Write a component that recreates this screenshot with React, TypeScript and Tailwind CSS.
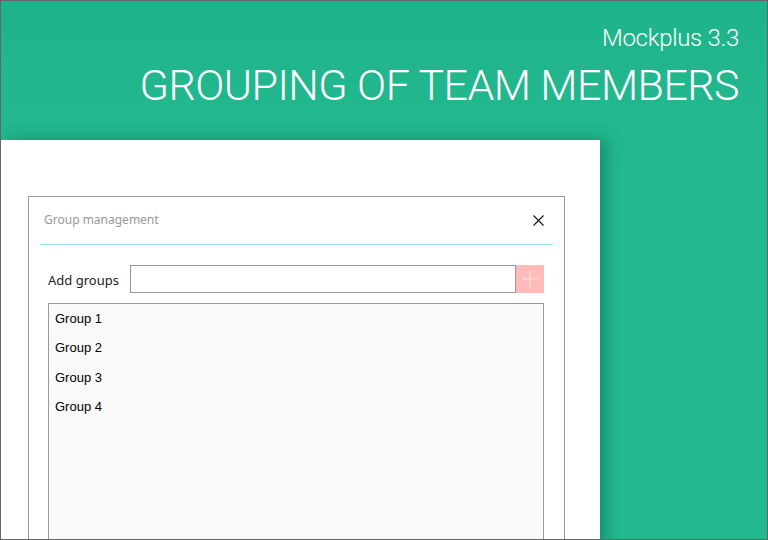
import React from "react";

export default function App() {
  const groups = ["Group 1", "Group 2", "Group 3", "Group 4"];
  return (
    <div className="w-[768px] h-[540px] border border-[#666666] overflow-hidden flex flex-col bg-gradient-to-b from-[#1fb38a] to-[#23b98f] to-[30%]">
      <div className="h-[139px] shrink-0 flex flex-col items-end pr-[28px] text-white" style={{ fontFamily: "Roboto, 'Liberation Sans', sans-serif" }}>
        <div className="mt-[22px] text-[24px] leading-[30px] font-light tracking-[-0.3px]">Mockplus 3.3</div>
        <div className="mt-[7px] text-[43px] leading-[50px] font-light tracking-[-0.55px]">GROUPING OF TEAM MEMBERS</div>
      </div>
      <div className="flex-1 flex">
        <div className="w-[599px] bg-white pt-[56px] pl-[27px] shadow-[6px_0_14px_rgba(0,60,40,0.35)] relative z-10">
          <div className="w-[537px] h-[400px] border border-[#999999] bg-white" style={{ fontFamily: "'Noto Sans', 'Liberation Sans', sans-serif" }}>
            <div className="h-[47px] flex items-center justify-between pl-[15px] pr-[20px]">
              <span className="text-[12px] text-[#999999] mt-[-1px]">Group management</span>
              <svg width="11" height="11" viewBox="0 0 11 11" className="mt-[-1px]">
                <path d="M0.5 0.5 L10.5 10.5 M10.5 0.5 L0.5 10.5" stroke="#111" strokeWidth="1.1" />
              </svg>
            </div>
            <div className="mx-[11px] h-px bg-[#9be4ec]" />
            <div className="flex items-center mt-[20px] ml-[19px]">
              <span className="w-[82px] text-[13px] text-[#222] mt-[3px]">Add groups</span>
              <div className="w-[386px] h-[28px] border border-[#999999] bg-white" />
              <div className="w-[28px] h-[28px] bg-[#ffbaba] flex items-center justify-center">
                <svg width="18" height="18" viewBox="0 0 18 18">
                  <path d="M9 1 V17 M1 9 H17" stroke="#ffd9d9" strokeWidth="1.5" />
                </svg>
              </div>
            </div>
            <div className="ml-[19px] mt-[10px] w-[496px] h-[300px] border border-[#999999] bg-[#f9f9f9]" style={{ fontFamily: "'Liberation Sans', Arial, sans-serif" }}>
              {groups.map((g) => (
                <div key={g} className="h-[29.4px] flex items-center pl-[6px] text-[13px] text-black">
                  {g}
                </div>
              ))}
            </div>
          </div>
        </div>
      </div>
    </div>
  );
}
